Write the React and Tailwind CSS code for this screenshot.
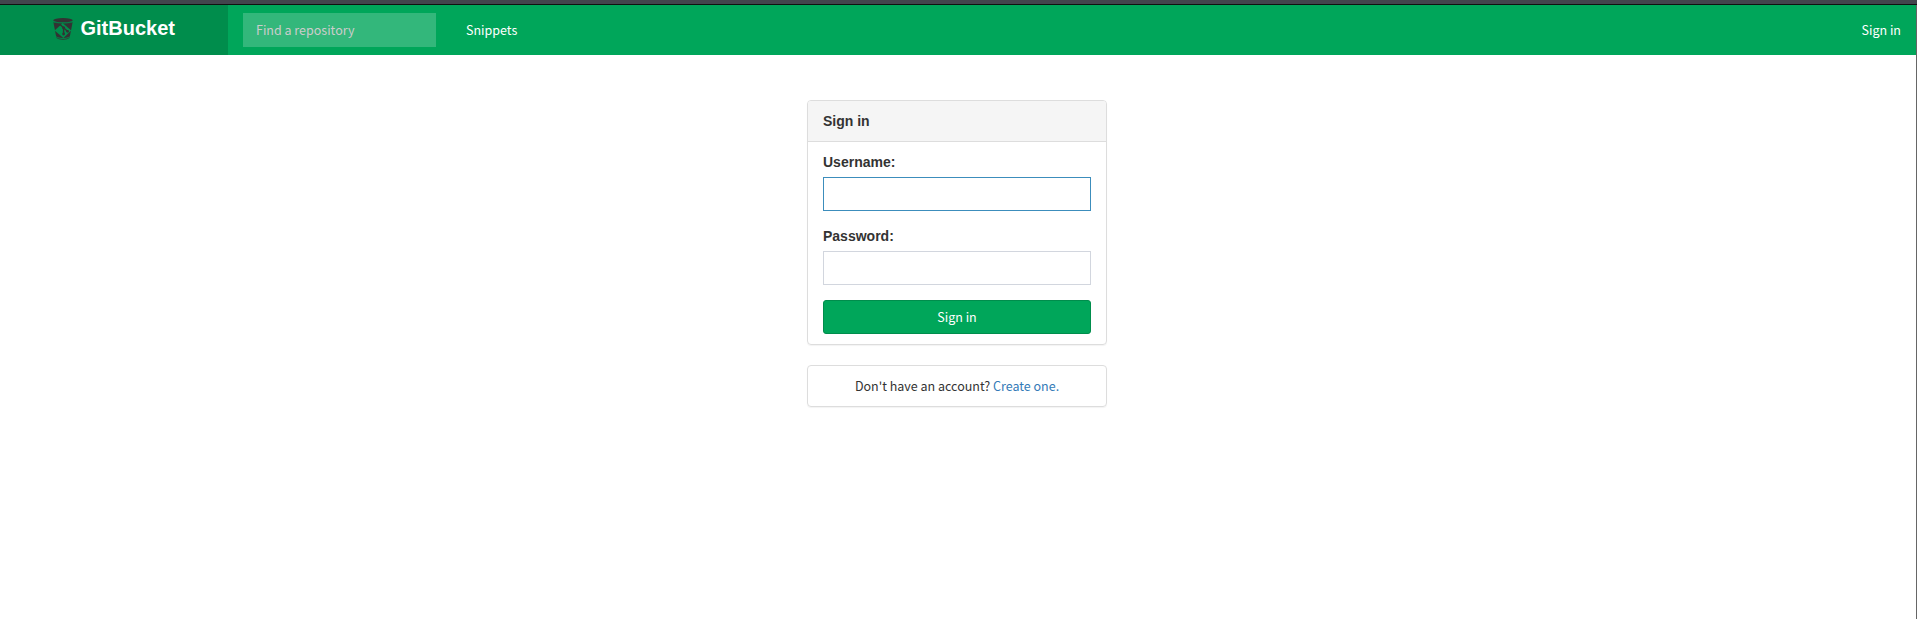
function BucketIcon() {
  return (
    <svg className="h-[22px] w-5 shrink-0" viewBox="0 0 20 22" fill="none">
      <ellipse cx="10" cy="2.2" rx="9.8" ry="2.1" fill="#333" />
      <path d="M0.4 4.2C4 5.6 16 5.6 19.6 4.2L16.6 19.8C14.5 22.3 5.5 22.3 3.4 19.8Z" fill="#333" />
      <path d="M0.6 4C4 5.5 16 5.5 19.4 4" stroke="#0b6f41" strokeWidth="0.7" />
      <path d="M9.6 5L18.2 12.6L10.4 20L1.6 12.4L6 8.6Z" fill="#008d4c" />
      <path d="M3.2 18.8C6 21 14 21 16.8 18.8" stroke="#008d4c" strokeWidth="0.9" />
      <path d="M6.6 6L10.6 9.8V16M10.6 9.8L14.5 13.3" stroke="#333" strokeWidth="1.4" />
      <circle cx="10.6" cy="9.8" r="1.5" fill="#333" />
      <circle cx="10.6" cy="16" r="1.4" fill="#333" />
      <circle cx="14.6" cy="13.3" r="1.4" fill="#333" />
    </svg>
  );
}

function Field({ label, type, inputClass, className }) {
  return (
    <label className={className}>
      <span className="block h-5 font-['Liberation_Sans',sans-serif] text-sm font-bold leading-5">{label}</span>
      <input type={type} className={`mt-[5px] block h-[34px] w-full border bg-white px-3 outline-none ${inputClass}`} />
    </label>
  );
}

export default function App() {
  return (
    <div className="flex h-[619px] w-full flex-col border-r border-[#666] bg-white font-['Noto_Sans_CJK_JP',sans-serif] text-[12.5px] leading-5 text-[#333]">
      <div className="-mr-px h-[5px] shrink-0 border-b border-[#111] bg-[#43454d]" />
      <header className="flex h-[50px] shrink-0 bg-[#00a65a] text-white">
        <a className="flex w-[228px] items-center bg-[#008d4c] pb-[2px] pl-[53px] font-['Liberation_Sans',sans-serif] text-xl font-bold">
          <BucketIcon />
          <span className="ml-[7.5px] pb-[2px]">GitBucket</span>
        </a>
        <input
          placeholder="Find a repository"
          className="ml-[15px] mt-2 h-[34px] w-[193px] bg-white/20 px-[13px] pb-[2px] outline-none placeholder:text-[#ccc]"
        />
        <nav className="flex flex-1 items-center justify-between pl-[30px] pr-[15px]">
          <a>Snippets</a>
          <a>Sign in</a>
        </nav>
      </header>
      <main className="ml-[807px] mt-[45px] w-[300px]">
        <section className="h-[245px] rounded border border-[#ddd] shadow-[0_1px_1px_rgba(0,0,0,0.05)]">
          <h1 className="h-[41px] rounded-t-[3px] border-b border-[#ddd] bg-[#f5f5f5] px-[15px] py-[10px] font-['Liberation_Sans',sans-serif] text-sm font-bold leading-5">
            Sign in
          </h1>
          <form className="px-[15px] pt-[10px]">
            <Field label="Username:" type="text" inputClass="border-[#3c8dbc]" className="block" />
            <Field label="Password:" type="password" inputClass="border-[#d2d6de]" className="mt-[15px] block" />
            <button type="button" className="mt-[15px] block h-[34px] w-full rounded-[3px] border border-[#008d4c] bg-[#00a65a] text-white">
              Sign in
            </button>
          </form>
        </section>
        <section className="mt-5 flex h-[42px] items-center justify-center rounded border border-[#ddd] shadow-[0_1px_1px_rgba(0,0,0,0.05)]">
          <p>
            Don't have an account? <a className="text-[#337ab7]">Create one.</a>
          </p>
        </section>
      </main>
    </div>
  );
}
